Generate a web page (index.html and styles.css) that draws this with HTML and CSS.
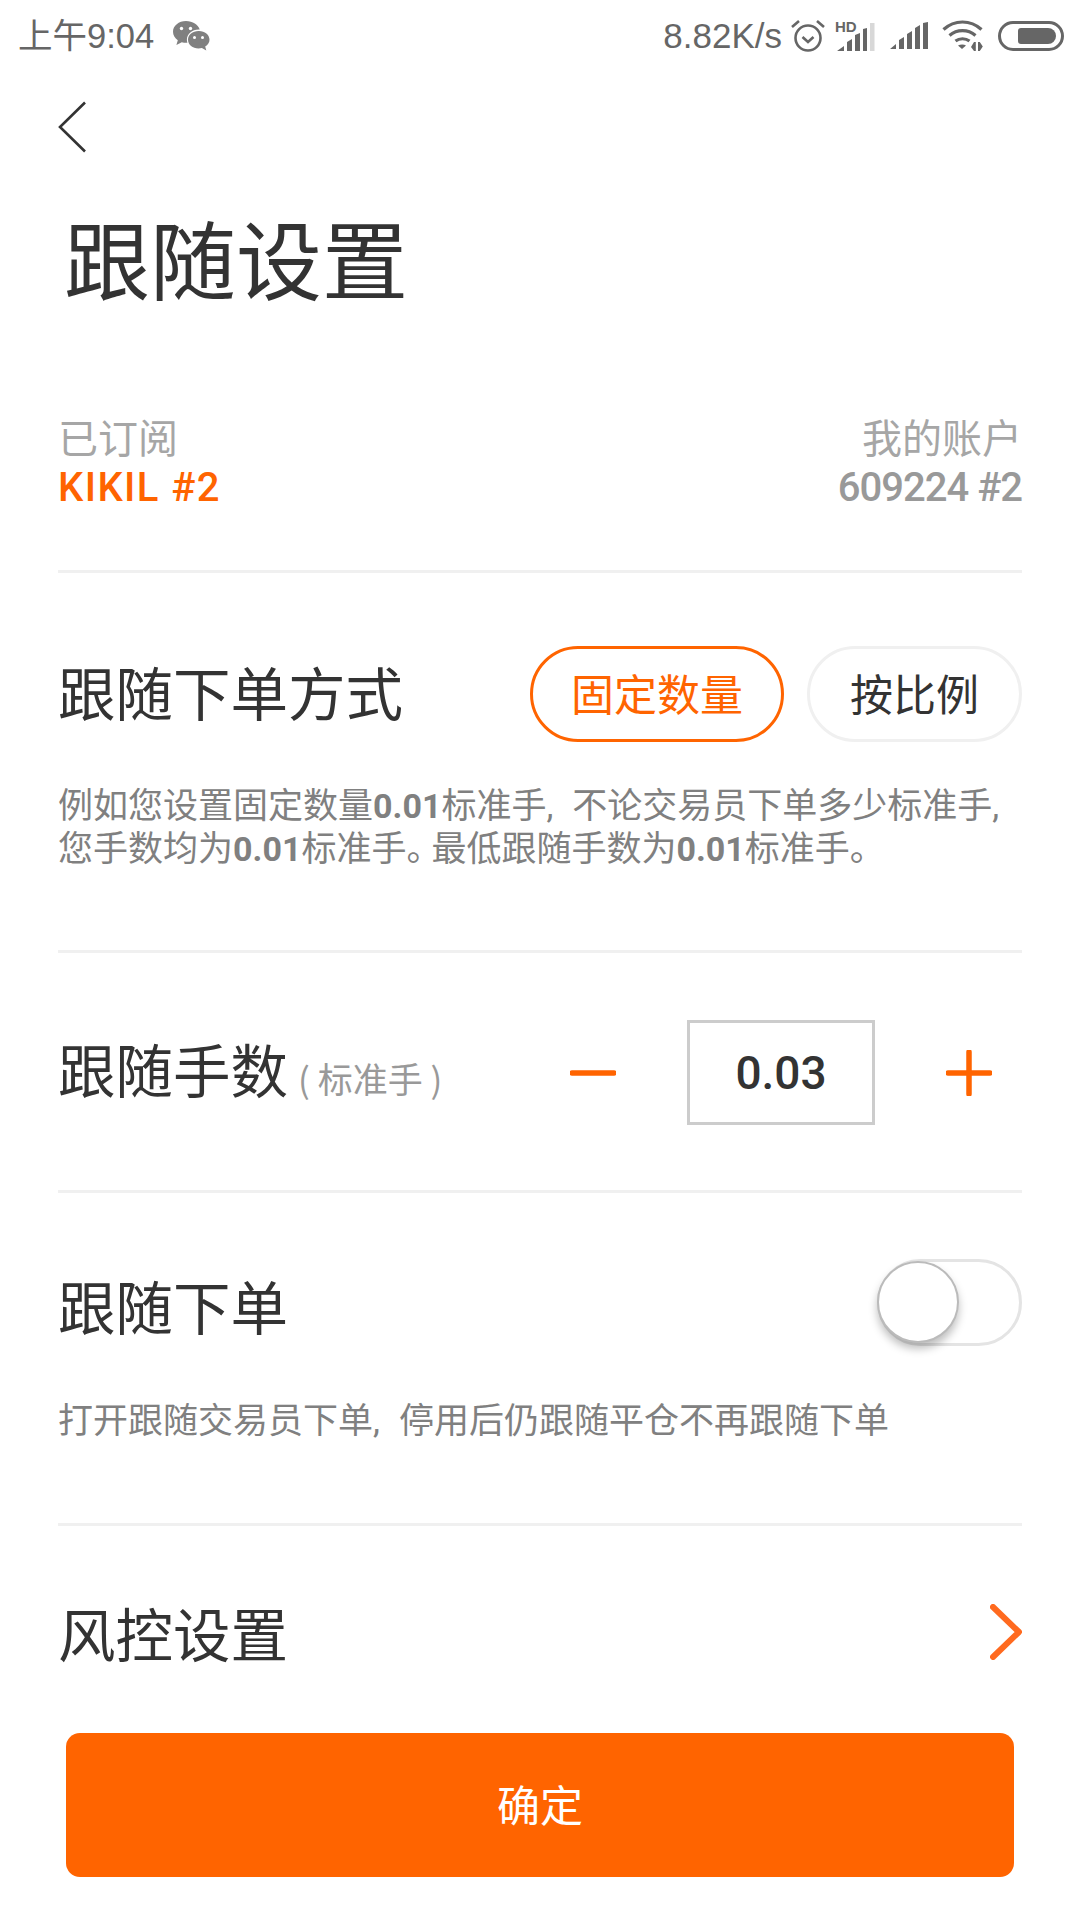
FILE: index.html
```html
<!DOCTYPE html>
<html lang="zh-CN">
<head>
    <meta charset="UTF-8">
    <meta name="viewport" content="width=device-width, initial-scale=1.0">
    <title>跟随设置</title>
    <link rel="stylesheet" href="styles.css">
</head>
<body>

<div class="statusbar">
    <div class="status-left">
        <span class="status-time">上午9:04</span>
        <svg class="icon-wechat" width="38" height="33" viewBox="0 0 38 33">
            <path fill="#808080" d="M14 1C6.800 1 1 5.800 1 11.800c0 3.400 1.900 6.400 4.800 8.400L4.400 25l5.400-2.800c1.500.4 2.800.6 4.200.6.500 0 1 0 1.400-.1-.3-1-.5-2-.5-3 0-5.600 5.200-10.100 11.700-10.100h1.100C26.400 4.600 20.700 1 14 1z"/>
            <path fill="#808080" d="M26.500 11C20.700 11 16 14.900 16 19.800s4.700 8.800 10.500 8.800c1.200 0 2.300-.2 3.400-.5l4.400 2.400-1.100-3.900c2.700-1.600 4.300-4 4.300-6.800 0-4.900-4.700-8.800-10.500-8.800z"/>
            <circle cx="9.500" cy="8.500" r="1.700" fill="#fff"/>
            <circle cx="18.500" cy="8.500" r="1.700" fill="#fff"/>
            <circle cx="22.500" cy="17.500" r="1.500" fill="#fff"/>
            <circle cx="30.500" cy="17.500" r="1.500" fill="#fff"/>
        </svg>
    </div>
    <div class="status-right">
        <span class="status-speed">8.82K/s</span>
        <svg class="icon-alarm" width="36" height="34" viewBox="0 0 36 34">
            <circle cx="18" cy="19" r="12.500" fill="none" stroke="#666" stroke-width="2.600"/>
            <path d="M12.500 18l5.500 5 5.500-5" fill="none" stroke="#666" stroke-width="2.600"/>
            <path d="M2 8l7-6M34 8l-7-6" fill="none" stroke="#666" stroke-width="2.600"/>
        </svg>
        <svg class="icon-signal-hd" width="42" height="36" viewBox="0 0 42 36">
            <text x="1" y="14" class="hd-text">HD</text>
            <path fill="#666" d="M3 33l7-5v5zM13 33v-9l5-3v12zM21 33V17l5-2v18zM29 33V11l4-1v23z"/>
            <rect x="36" y="5" width="4.500" height="28" fill="#d8d8d8"/>
        </svg>
        <svg class="icon-signal" width="41" height="28" viewBox="0 0 41 28">
            <path fill="#666" d="M1 27l6-5v5zM10 27v-9l5-3v12zM18 27V12l5-3v18zM26 27V6l5-3v24zM34 27V1l5-1v27z"/>
        </svg>
        <svg class="icon-wifi" width="44" height="32" viewBox="0 0 44 32">
            <path d="M1.500 9.500c11-10 27-10 38 0M7.500 15.500c7.500-6.500 18.500-6.500 26 0M13.500 21c4-3 10-3 14 0" fill="none" stroke="#666" stroke-width="3.200"/>
            <path fill="#666" d="M16 25.500c2.500-1.500 6-1.500 8 0l-4 3.500z"/>
            <path fill="#666" d="M32 22h1.800v9H32l-3-4zM36 22h1.800l3 4.500-3 4.500H36z"/>
        </svg>
        <div class="battery"><div class="battery-fill"></div></div>
    </div>
</div>

<div class="page">
    <svg class="back" width="30" height="52" viewBox="0 0 30 52">
        <path d="M28 1.500L3 26l25 24.500" fill="none" stroke="#333" stroke-width="2.600"/>
    </svg>

    <h1 class="title">跟随设置</h1>

    <div class="accounts">
        <div>
            <div class="account-label">已订阅</div>
            <div class="account-name orange">KIKIL #2</div>
        </div>
        <div class="right">
            <div class="account-label">我的账户</div>
            <div class="account-name grey">609224 #2</div>
        </div>
    </div>

    <div class="section section-mode">
        <div class="row">
            <div class="row-title mode-title">跟随下单方式</div>
            <div class="pills">
                <div class="pill active">固定数量</div>
                <div class="pill">按比例</div>
            </div>
        </div>
        <p class="desc">例如您设置固定数量<b>0.01</b>标准手<span class="comma">,</span>不论交易员下单多少标准手<span class="comma">,</span><br>您手数均为<b>0.01</b>标准手<span class="stop">。</span>最低跟随手数为<b>0.01</b>标准手<span class="stop">。</span></p>
    </div>

    <div class="section section-lots">
        <div class="row">
            <div class="row-title">跟随手数<span class="unit">( 标准手 )</span></div>
            <div class="stepper">
                <svg width="46" height="46" viewBox="0 0 46 46"><path d="M2 23h42" stroke="#ff6400" stroke-width="5.500" stroke-linecap="round"/></svg>
                <div class="stepper-value">0.03</div>
                <svg width="46" height="46" viewBox="0 0 46 46"><path d="M2 23h42M23 2v42" stroke="#ff6400" stroke-width="5.500" stroke-linecap="round"/></svg>
            </div>
        </div>
    </div>

    <div class="section section-follow">
        <div class="row">
            <div class="row-title follow-title">跟随下单</div>
            <div class="toggle"><div class="toggle-knob"></div></div>
        </div>
        <p class="desc">打开跟随交易员下单<span class="comma">,</span>停用后仍跟随平仓不再跟随下单</p>
    </div>

    <div class="section section-risk">
        <div class="row">
            <div class="row-title">风控设置</div>
            <svg width="32" height="56" viewBox="0 0 32 56">
                <path d="M3 3l26 25L3 53" fill="none" stroke="#ff6a1f" stroke-width="6" stroke-linecap="round" stroke-linejoin="round"/>
            </svg>
        </div>
    </div>

    <div class="confirm">确定</div>
</div>

</body>
</html>
```

FILE: styles.css
```css
* {
    margin: 0;
    padding: 0;
    box-sizing: border-box;
}

html, body {
    width: 1080px;
    height: 1920px;
    overflow: hidden;
    background: #fff;
}

body {
    font-family: "Noto Sans CJK SC", sans-serif;
    color: #333;
}

.statusbar {
    height: 72px;
    padding: 0 16px 0 18px;
    display: flex;
    align-items: center;
    justify-content: space-between;
    color: #666;
}

.status-left, .status-right {
    display: flex;
    align-items: center;
}

.status-time {
    margin-bottom: 1px;
    font-family: "Liberation Sans", "Noto Sans CJK SC", sans-serif;
    font-size: 34.5px;
    line-height: 44px;
}

.icon-wechat {
    margin-left: 18px;
}

.status-speed {
    font-family: "Liberation Sans", sans-serif;
    font-size: 35px;
    line-height: 44px;
    white-space: nowrap;
}

.status-right svg {
    margin-left: 8px;
}

.status-right .icon-signal {
    margin-left: 13px;
}

.status-right .icon-wifi {
    margin-left: 12px;
}

.hd-text {
    font-family: "Liberation Sans", sans-serif;
    font-size: 15px;
    font-weight: 700;
    fill: #666;
}

.battery {
    width: 66px;
    height: 30px;
    margin-left: 12px;
    padding: 4px 5px;
    display: flex;
    justify-content: flex-end;
    border: 3px solid #666;
    border-radius: 15px;
}

.battery-fill {
    width: 38px;
    background: #666;
    border-radius: 3px 8px 8px 3px;
}

.page {
    padding: 0 58px;
}

.back {
    display: block;
    margin-top: 29px;
    margin-left: -1px;
}

.title {
    margin: 46px 0 0 6px;
    font-size: 86px;
    line-height: 116px;
    font-weight: 400;
}

.accounts {
    margin-top: 93px;
    padding: 0 0 59px 2px;
    display: flex;
    justify-content: space-between;
    border-bottom: 3px solid #f0f0f0;
}

.right {
    text-align: right;
}

.account-label {
    margin-left: -2px;
    font-size: 40px;
    line-height: 57px;
    color: #a6a6a6;
}

.account-name {
    font-family: Roboto, sans-serif;
    font-size: 40px;
    line-height: 46px;
    font-weight: 500;
}

.orange {
    margin-left: -2px;
    color: #ff6400;
    letter-spacing: 1.4px;
}

.grey {
    color: #999;
    letter-spacing: -1px;
}

.section {
    border-bottom: 3px solid #f0f0f0;
}

.row {
    display: flex;
    align-items: center;
    justify-content: space-between;
}

.row-title {
    font-size: 57.5px;
    line-height: 80px;
    color: #333;
}

.mode-title {
    margin-bottom: 7px;
}

.follow-title {
    margin-top: 5px;
}

.unit {
    margin-left: 10px;
    font-size: 35px;
    color: #999;
}

.desc {
    font-family: Roboto, "Noto Sans CJK SC", sans-serif;
    font-size: 35px;
    line-height: 43px;
    color: #808080;
}

.desc b {
    font-size: 34px;
    font-weight: 700;
}

.comma {
    margin-right: 19px;
}

.stop {
    letter-spacing: -10px;
}

.section-mode {
    padding-top: 73px;
    height: 380px;
}

.section-mode .desc {
    margin-top: 43px;
}

.pills {
    display: flex;
    gap: 23px;
}

.pill {
    height: 96px;
    padding: 0 38px 5px;
    display: flex;
    align-items: center;
    font-family: Roboto, "Noto Sans CJK SC", sans-serif;
    font-size: 43px;
    border: 3px solid #f0f0f0;
    border-radius: 48px;
    color: #333;
}

.pill:last-child {
    padding: 0 40px 5px;
}

.pill.active {
    border-color: #ff6400;
    color: #ff6400;
}

.section-lots {
    height: 240px;
    padding-top: 67px;
}

.stepper {
    display: flex;
    align-items: center;
    margin-right: 30px;
}

.stepper-value {
    width: 188px;
    height: 105px;
    margin: 0 71px;
    display: flex;
    align-items: center;
    justify-content: center;
    border: 3px solid #ccc;
    font-family: Roboto, sans-serif;
    font-size: 46px;
    font-weight: 500;
}

.section-follow {
    height: 333px;
    padding-top: 66px;
}

.section-follow .desc {
    margin-top: 54px;
}

.toggle {
    width: 145px;
    height: 87px;
    position: relative;
    border: 3px solid #e4e4e4;
    border-radius: 44px;
}

.toggle-knob {
    position: absolute;
    left: -3px;
    top: -1px;
    width: 82px;
    height: 82px;
    background: #fff;
    border: 2px solid #bbb;
    border-radius: 50%;
    box-shadow: 0 6px 8px rgba(0, 0, 0, 0.25);
}

.section-risk {
    border-bottom: 0;
    height: 207px;
    padding-top: 66px;
}

.confirm {
    margin: 0 8px;
    padding-bottom: 5px;
    height: 144px;
    display: flex;
    align-items: center;
    justify-content: center;
    background: #ff6400;
    border-radius: 14px;
    color: #fff;
    font-size: 43px;
}
```
